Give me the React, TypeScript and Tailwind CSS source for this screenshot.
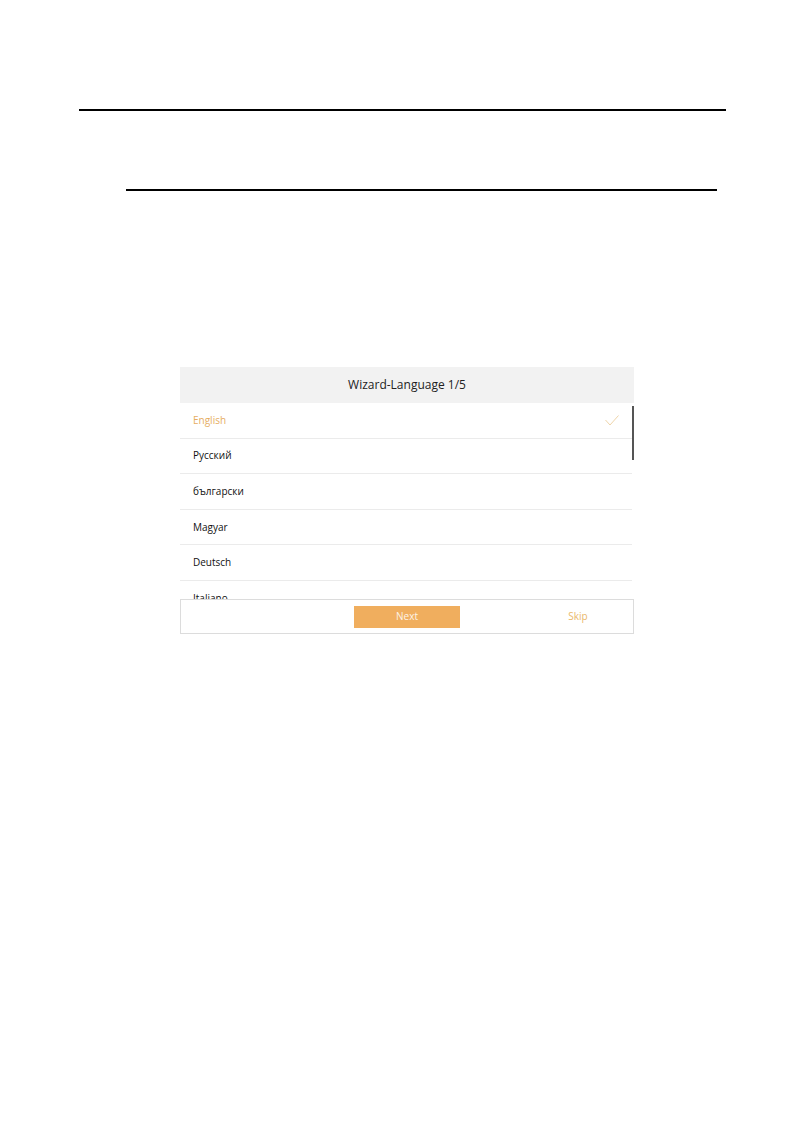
import React from "react";

const langs = ["English", "Русский", "български", "Magyar", "Deutsch", "Italiano"];

export default function App() {
  return (
    <div className="w-[794px] h-[1134px] bg-white flex flex-col" style={{ fontFamily: '"Open Sans", "Noto Sans", sans-serif' }}>
      <div className="mt-[109px] ml-[79px] w-[647px] h-[2px] bg-black" />
      <div className="mt-[78px] ml-[126px] w-[591px] h-[2px] bg-black" />
      <div className="mt-[176px] ml-[180px] w-[454px] flex flex-col">
        <div className="h-[36px] bg-[#f2f2f2] flex items-center justify-center text-[12px] text-[#222]">
          Wizard-Language 1/5
        </div>
        <div className="relative h-[196px] overflow-hidden">
          <div className="absolute right-0 top-[3px] w-[2px] h-[54px] bg-[#555]" />
          {langs.map((l, i) => (
            <div
              key={l}
              className="h-[35.6px] mr-[2px] border-b border-[#ebebeb] flex items-center justify-between pl-[13px] pr-[13px] text-[10px]"
            >
              <span className={i === 0 ? "text-[#e6ad62]" : "text-[#111]"}>{l}</span>
              {i === 0 && (
                <svg width="14" height="11" viewBox="0 0 14 11">
                  <polyline points="0.5,5 5,10 13.5,0.5" fill="none" stroke="#eccf9f" strokeWidth="0.9" />
                </svg>
              )}
            </div>
          ))}
        </div>
        <div className="relative h-[35px] border border-[#dcdcdc] bg-white flex items-center">
          <div className="ml-[173px] w-[106px] h-[22px] bg-[#f0ae5e] flex items-center justify-center text-[10px] text-[#fdf3e6]">
            Next
          </div>
          <div className="ml-[101px] w-[34px] text-center text-[10px] text-[#eab86a]">Skip</div>
        </div>
      </div>
    </div>
  );
}
